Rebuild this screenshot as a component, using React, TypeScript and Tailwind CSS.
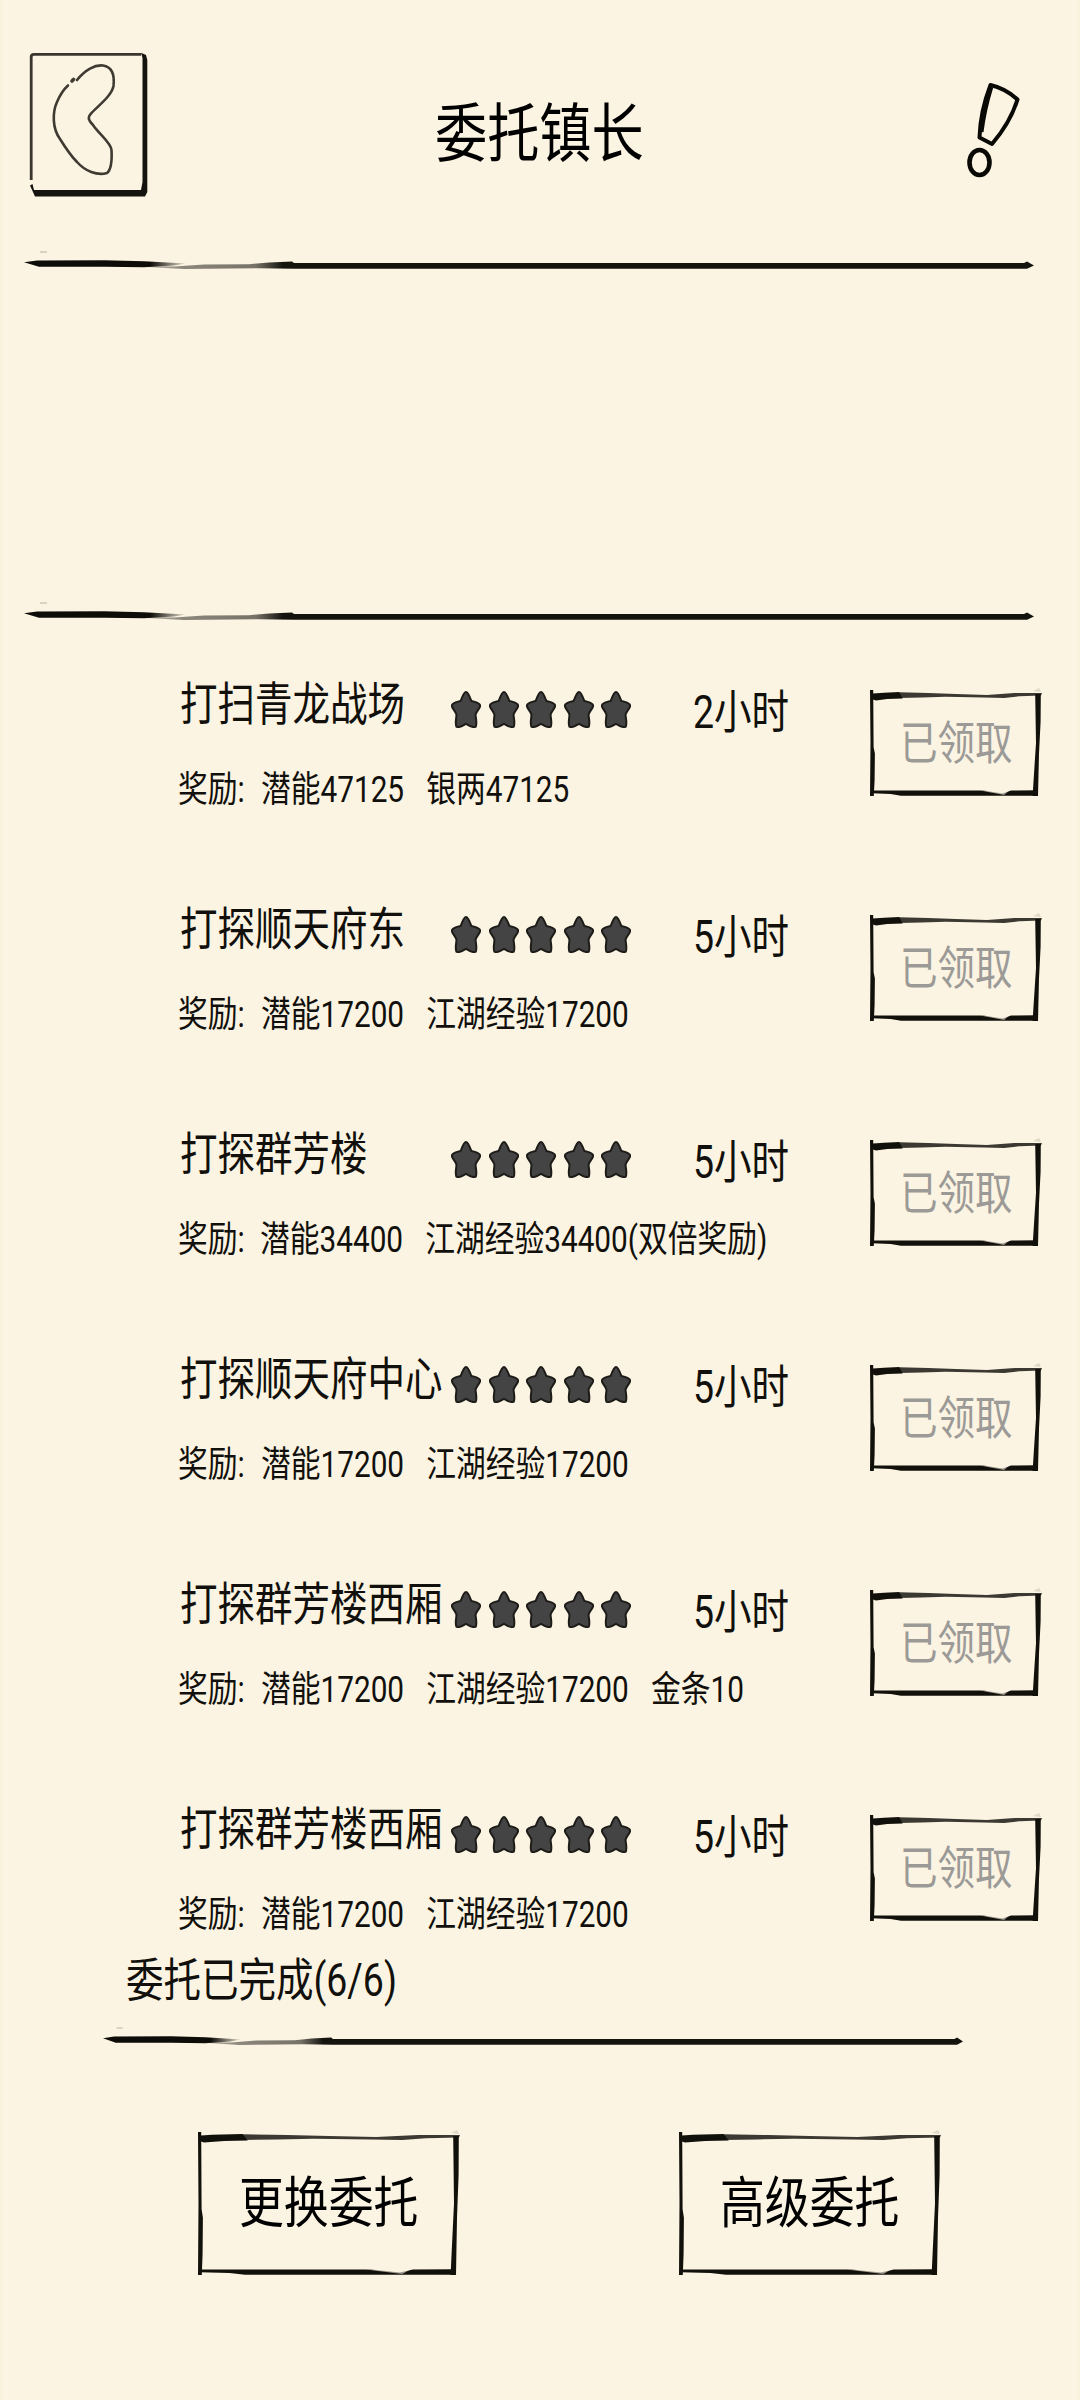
import type { ReactNode } from "react";
import clsx from "clsx";

type Task = {
  title: string;
  hours: number;
  rewards: string[];
};

const tasks: Task[] = [
  { title: "打扫青龙战场", hours: 2, rewards: ["潜能47125", "银两47125"] },
  { title: "打探顺天府东", hours: 5, rewards: ["潜能17200", "江湖经验17200"] },
  {
    title: "打探群芳楼",
    hours: 5,
    rewards: ["潜能34400", "江湖经验34400(双倍奖励)"],
  },
  { title: "打探顺天府中心", hours: 5, rewards: ["潜能17200", "江湖经验17200"] },
  {
    title: "打探群芳楼西厢",
    hours: 5,
    rewards: ["潜能17200", "江湖经验17200", "金条10"],
  },
  { title: "打探群芳楼西厢", hours: 5, rewards: ["潜能17200", "江湖经验17200"] },
];

// The whole game font is squeezed horizontally.
const Squeezed = ({
  children,
  className,
}: {
  children: ReactNode;
  className?: string;
}) => (
  <span
    className={clsx(
      "block w-max origin-left scale-x-[0.815] whitespace-pre leading-none",
      className
    )}
  >
    {children}
  </span>
);

const BrushLine = ({ className }: { className: string }) => (
  <svg
    viewBox="0 0 1010 24"
    preserveAspectRatio="none"
    className={clsx("block shrink-0", className)}
  >
    <defs>
      <linearGradient id="dry" x1="0" x2="1" y1="0" y2="0">
        <stop offset="0" stopColor="#0d0c08" />
        <stop offset="0.78" stopColor="#0d0c08" />
        <stop offset="1" stopColor="#0d0c08" stopOpacity="0.1" />
      </linearGradient>
      <linearGradient id="wet" x1="0" x2="1" y1="0" y2="0">
        <stop offset="0" stopColor="#1c1b16" stopOpacity="0.25" />
        <stop offset="0.06" stopColor="#1c1b16" stopOpacity="0.5" />
        <stop offset="0.14" stopColor="#1c1b16" stopOpacity="0.6" />
        <stop offset="0.17" stopColor="#14130e" />
        <stop offset="1" stopColor="#14130e" />
      </linearGradient>
    </defs>
    <path d="M16 3.5h7v1h-7z" fill="#b9b2a2" />
    <path
      d="M0 14.3 13 12.5 80 12.3 120 13.3 162 15.6 150 17.5 120 19.2 80 18.8 15 18.8Z"
      fill="url(#dry)"
    />
    <path
      d="M105 18 150 18.5 180 16.5 225 16.2 245 14.5 268 13.5 270 15 1000 14.9 1003 13.4 1010 17.4 1003 20.8 270 20.8 235 20.2 160 21Z"
      fill="url(#wet)"
    />
  </svg>
);

const InkFrame = ({
  width: w,
  height: h,
  children,
}: {
  width: number;
  height: number;
  children: ReactNode;
}) => (
  <div className="grid shrink-0">
    <svg
      width={w}
      height={h}
      viewBox={`0 0 ${w} ${h}`}
      className="col-start-1 row-start-1 overflow-visible"
      fill="#11100b"
    >
      <path
        d={`M0 0 3.2 0 3.6 ${h * 0.54} 4.9 ${h * 0.6} 4.6 ${h * 0.85} 3.8 ${h} 0 ${h} 0.5 ${h * 0.5}Z`}
      />
      <path
        d={`M3 3.5 14 2.8 ${w * 0.17} 2 ${w * 0.19} 8.5 ${w * 0.1} 9 6 10.5 3 9.5Z`}
      />
      <path
        d={`M${w * 0.17} 2.2 ${w * 0.34} 3 ${w * 0.5} 4 ${w * 0.68} 5 ${w * 0.84} 3 ${w} 3 ${w - 1} 5.4 ${w * 0.87} 6.2 ${w * 0.78} 8 ${w * 0.66} 7.6 ${w * 0.44} 6.8 ${w * 0.3} 7.4 ${w * 0.17} 8Z`}
        fillOpacity={0.82}
      />
      <path
        d={`M${w - 6.8} 4 ${w - 1.2} 4 ${w - 1.4} ${h * 0.3} ${w - 3} ${h * 0.6} ${w - 4} ${h} ${w - 9.4} ${h} ${w - 8.2} ${h * 0.82} ${w - 6} ${h * 0.5}Z`}
      />
      <path
        d={`M2 ${h - 5.4} ${w * 0.66} ${h - 5.4} ${w * 0.77} ${h - 2.5} ${w * 0.82} ${h - 5.4} ${w - 5} ${h - 5.8} ${w - 5} ${h - 0.2} ${w * 0.8} ${h - 0.2} ${w * 0.18} ${h - 0.2} ${w * 0.12} ${h - 2} 2 ${h - 2.8}Z`}
      />
      <path
        d={`M${w * 0.64} ${h - 5.6} ${w * 0.81} ${h - 5.6} ${w * 0.78} ${h - 1}Z`}
        fill="#fcf4e2"
        fillOpacity={0.6}
      />
      <path d={`M${w - 9} 1 ${w - 3} -2 ${w - 1} 2Z`} fillOpacity={0.12} />
    </svg>
    <div className="col-start-1 row-start-1 flex items-center">{children}</div>
  </div>
);

const Star = () => (
  <svg viewBox="0 0 30 37" className="h-[37px] w-[30px]">
    <path
      d="M15 1C17 1 18.5 5 20.3 9.8 23 11 28 11 29.2 14.5 29.3 17 25.5 20 24.6 23.5 24.5 27 26.3 31.500 24.8 35.6 22 37.5 18 34.5 15 32.8 12 34.5 8 37.5 5.4 35.6 3.8 31.5 5.6 27 5.4 23.5 4.5 20 0.7 17 0.8 14.5 2 11 7 11 9.7 9.8 11.5 5 13 1 15 1Z"
      fill="#444444"
      stroke="#1d1c19"
      strokeWidth={2}
    />
  </svg>
);

const BackIcon = () => (
  <svg viewBox="0 0 120 146" className="h-[146px] w-[120px]" fill="none">
    <path
      d="M2.2 128V5Q2.2 2.3 5 2.3H112"
      stroke="#3a362e"
      strokeWidth={2.8}
    />
    <path
      d="M112 .8 117 3 118.3 8V140L116 144.5H6L3.5 139 1 133.5 3.5 132 5 138H112L113.500 130V6Z"
      fill="#14130f"
    />
    <g stroke="#3f3a32" strokeWidth={2.6} strokeLinecap="round">
      <path d="M48 28C56 18 66 12.5 74 13.5 84 15 85.500 25 84.5 34 82.5 44 70 53 62 61.5 58 66 60 69 64 73 70 82 82 91 82.5 98 83 107 83 117 78 121 68 124 56 119 48 110 41 103 36 95 31 87 23 76 23.5 60 28 50 31 43 34 38 39 33.5" />
      <path d="M43 29 44.5 27.5" strokeWidth={3.6} />
    </g>
  </svg>
);

const ExclamationIcon = () => (
  <svg
    viewBox="0 0 56 98"
    className="h-[98px] w-[56px]"
    fill="none"
    stroke="#090906"
    strokeLinejoin="round"
  >
    <path
      d="M23.500 3C32 5 42 9.5 50.500 17.5 46 32 37 48 25 62L12.500 55.5C13 38 17 20 23.500 3Z"
      strokeWidth={4}
    />
    <path d="M23.800 5C19.500 19 16 34 14 50" strokeWidth={5} />
    <ellipse cx="12.500" cy="80.5" rx="10" ry="12.5" strokeWidth={4.6} />
  </svg>
);

const TaskRow = ({ title, hours, rewards }: Task) => (
  <li className="flex h-[225px] shrink-0">
    <div className="w-[692px] shrink-0">
      <div className="flex h-[50px]">
        <div className="w-[273px] pl-0.5 pt-[3px]">
          <Squeezed className="text-[46px]">{title}</Squeezed>
        </div>
        <div className="flex gap-[7.5px] pt-[13px]">
          {[0, 1, 2, 3, 4].map((i) => (
            <Star key={i} />
          ))}
        </div>
      </div>
      <div className="flex pt-[44px] text-[36.5px]">
        <div className="w-[83px]">
          <Squeezed>奖励:</Squeezed>
        </div>
        <Squeezed>{rewards.join("   ")}</Squeezed>
      </div>
    </div>
    <div className="-ml-[177px] w-[177px] pt-[11px]">
      <Squeezed className="text-[46px]">{hours}小时</Squeezed>
    </div>
    <div className="pt-3">
      <InkFrame width={172} height={106}>
        <Squeezed className="ml-[30px] text-[46px] text-[#9b9a97]">
          已领取
        </Squeezed>
      </InkFrame>
    </div>
  </li>
);

export default function App() {
  return (
    <main className="flex h-[2400px] w-[1080px] flex-col overflow-hidden border-x-2 border-[#faf1dd] bg-[#fcf4e2] font-['Roboto','Noto_Sans_CJK_SC',sans-serif] text-[#11100c]">
      <header className="flex h-[248px] shrink-0 items-start pl-[27px]">
        <button className="mt-[52px]">
          <BackIcon />
        </button>
        <h1 className="ml-[286px] mt-[103px] w-[532px] text-black">
          <Squeezed className="text-[64px]">委托镇长</Squeezed>
        </h1>
        <button className="mt-[82px]">
          <ExclamationIcon />
        </button>
      </header>

      <BrushLine className="ml-[22px] h-6 w-[1010px]" />
      <section className="h-[327px] shrink-0" />
      <BrushLine className="ml-[22px] h-6 w-[1010px]" />

      <ul className="flex h-[1330px] shrink-0 flex-col pl-[176px] pt-[55px]">
        {tasks.map((task, i) => (
          <TaskRow key={i} {...task} />
        ))}
      </ul>

      <div className="h-[71px] shrink-0 pl-[124px] pt-1">
        <Squeezed className="text-[46px]">委托已完成(6/6)</Squeezed>
      </div>
      <BrushLine className="ml-[101px] h-6 w-[860px]" />

      <footer className="flex gap-[219px] pl-[196px] pt-[84px] text-[55px] text-black">
        <InkFrame width={262} height={143}>
          <Squeezed className="ml-[41px]">更换委托</Squeezed>
        </InkFrame>
        <InkFrame width={262} height={143}>
          <Squeezed className="ml-[41px]">高级委托</Squeezed>
        </InkFrame>
      </footer>
    </main>
  );
}
